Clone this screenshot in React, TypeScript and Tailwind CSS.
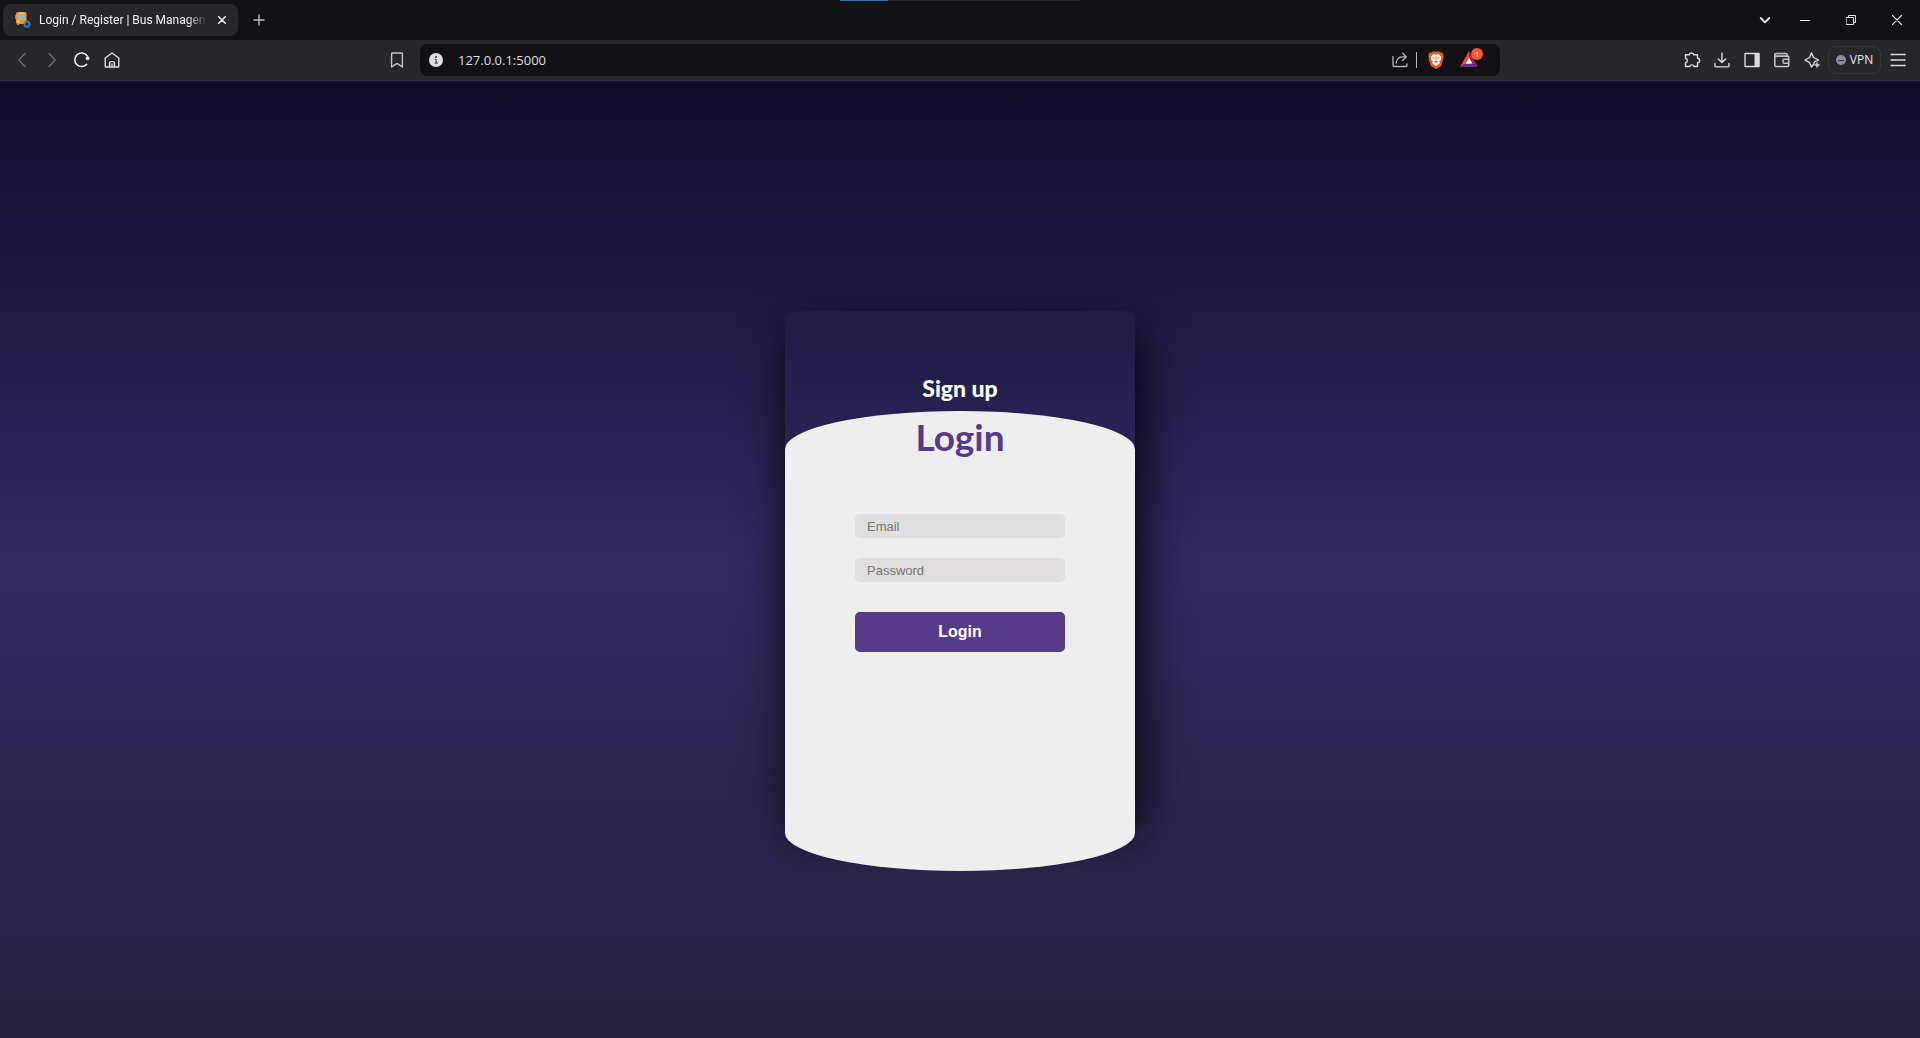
import React from "react";

function Glyph({ children, size = 18, className = "" }: { children: React.ReactNode; size?: number; className?: string }) {
  return (
    <svg
      width={size}
      height={size}
      viewBox={`0 0 ${size} ${size}`}
      fill="none"
      stroke="currentColor"
      strokeWidth="1.4"
      strokeLinecap="round"
      strokeLinejoin="round"
      className={`shrink-0 ${className}`}
      aria-hidden="true"
    >
      {children}
    </svg>
  );
}

function ToolButton({ label, className = "", children }: { label: string; className?: string; children: React.ReactNode }) {
  return (
    <button type="button" aria-label={label} className={`grid h-7 w-[30px] shrink-0 place-items-center ${className}`}>
      {children}
    </button>
  );
}

function BusIcon() {
  return (
    <svg width="16" height="16" viewBox="0 0 16 16" className="shrink-0" aria-hidden="true">
      <rect x="1" y="0" width="10.5" height="12" rx="1.8" fill="#f39a1d" />
      <rect x="2" y="11.5" width="2.2" height="1.6" rx="0.5" fill="#d98516" />
      <path d="M4 1.300h4.500" stroke="#fbe0a8" strokeWidth="0.8" />
      <rect x="2.3" y="2.4" width="8" height="5" rx="0.6" fill="#9fb4bd" />
      <rect x="0" y="3" width="1" height="4" fill="#c87a14" />
      <circle cx="3.4" cy="9.6" r="0.9" fill="#fff1c9" />
      <circle cx="12" cy="12.200" r="2.500" fill="#26262b" stroke="#2f86c5" strokeWidth="1.600" />
      <circle cx="12" cy="12.200" r="3.300" fill="none" stroke="#2f86c5" strokeWidth="1" strokeDasharray="1.300 1.290" />
    </svg>
  );
}

function ShieldIcon() {
  return (
    <svg width="16" height="18" viewBox="0 0 16 18" aria-hidden="true">
      <path d="M4.800.4h6.400l1.300 1.400 1.700-.2 1.500 2.300-.5 1.400.4 1.300-2 7.200c-.3 1-.8 1.500-1.600 2L8 18l-4-2.200c-.8-.5-1.300-1-1.600-2L.4 6.600l.4-1.300L.3 3.900l1.500-2.300 1.700.2z" fill="#f1561d" />
      <path d="M5.200 3.200L8 3.700l2.800-.5 2.500 2.600-.5 3.200-1.500 1.500.5 1.700L8 14.900l-3.800-2.700.5-1.700L3.200 9l-.5-3.200z" fill="#fff" />
      <path d="M4 6.200l2.800.6-.7 1.200zM12 6.200l-2.800.6.7 1.200zM7.500 5.500h1l-.2 4h-.6zM5.900 10.300L8 9.600l2.100.7L8 11.900z" fill="#f1561d" />
    </svg>
  );
}

function TabStrip() {
  return (
    <div className="relative flex h-10 items-center bg-[#111116] text-[#e8e8ec]">
      <div className="absolute left-[840px] top-0 flex h-px w-60 bg-[#25252b]">
        <div className="w-12 bg-[#2a6fae]" />
      </div>
      <div className="ml-[3px] flex h-8 w-[235px] items-center rounded-lg bg-[#26262b] pl-3">
        <BusIcon />
        <span className="ml-2 w-[168px] whitespace-nowrap font-['Roboto',sans-serif] text-[12px] leading-4 text-[#f2f2f4] [mask-image:linear-gradient(to_right,#000_148px,transparent)]">
          Login / Register | Bus Managem
        </span>
        <button type="button" aria-label="Close tab" className="ml-[5px] grid size-5 place-items-center">
          <Glyph size={10}>
            <path d="M1.700 1.700l6.600 6.600M8.300 1.700L1.700 8.300" strokeWidth="1.600" />
          </Glyph>
        </button>
      </div>
      <button type="button" aria-label="New tab" className="ml-[11px] grid size-5 place-items-center text-[#b9b9bf]">
        <Glyph size={12}>
          <path d="M6 1v10M1 6h10" />
        </Glyph>
      </button>
      <div className="ml-auto flex">
        <button type="button" aria-label="Search tabs" className="grid h-10 w-8 place-items-center">
          <Glyph size={12}>
            <path d="M1.700 4l4.300 4.300L10.300 4" strokeWidth="1.800" />
          </Glyph>
        </button>
        <button type="button" aria-label="Minimize" className="ml-px grid h-10 w-[46px] place-items-center">
          <Glyph size={10}>
            <path d="M0 5.500h10" strokeWidth="1" />
          </Glyph>
        </button>
        <button type="button" aria-label="Restore" className="grid h-10 w-[46px] place-items-center">
          <Glyph size={10}>
            <path d="M.5 2.500h7v7h-7zM2.500 2.500v-2h7v7h-2" strokeWidth="1" strokeLinejoin="miter" />
          </Glyph>
        </button>
        <button type="button" aria-label="Close" className="grid h-10 w-[46px] place-items-center">
          <Glyph size={10}>
            <path d="M.5.5l9 9M9.500.5l-9 9" strokeWidth="1.100" />
          </Glyph>
        </button>
      </div>
    </div>
  );
}

function AddressBar() {
  return (
    <div className="flex h-8 min-w-0 flex-1 items-center rounded-lg bg-[#111115] px-2">
      <svg width="14" height="14" viewBox="0 0 14 14" className="ml-px shrink-0" aria-hidden="true">
        <circle cx="7" cy="7" r="7" fill="#dedee3" />
        <circle cx="7" cy="4" r="0.9" fill="#2b2b31" />
        <path d="M5.800 6.400H7.200V10M5.600 10.100h3" stroke="#2b2b31" strokeWidth="1" fill="none" />
      </svg>
      <input
        aria-label="Address"
        defaultValue="127.0.0.1:5000"
        className="ml-[15px] min-w-0 flex-1 bg-transparent text-[13px] leading-5 text-[#dfdfe4] outline-none"
      />
      <button type="button" aria-label="Share" className="text-[#b4b4ba]">
        <Glyph size={16}>
          <path d="M1 4.500v8.800c0 .7.500 1.200 1.200 1.200h11.600c.7 0 1.200-.5 1.200-1.200V12M4.200 11C4.600 7.400 7 5 10 4.800h4M10.600 1.200l3.700 3.600-3.700 3.700" strokeWidth="1.300" />
        </Glyph>
      </button>
      <div className="ml-2 h-4 w-px bg-[#b4b4ba]" />
      <button type="button" aria-label="Brave Shields" className="ml-[11px]">
        <ShieldIcon />
      </button>
      <button type="button" aria-label="Brave Rewards" className="relative ml-4 mr-2 h-7 w-6">
        <svg width="18" height="16" viewBox="0 0 18 16" className="mb-[2px]" aria-hidden="true">
          <path d="M9 0L0 16l5.400-3.200L9 6.400z" fill="#ff4724" />
          <path d="M9 0l9 16-5.400-3.200L9 6.400z" fill="#9e1f63" />
          <path d="M0 16h18l-5.400-3.200H5.400z" fill="#662d91" />
          <path d="M9 6.400l3.600 6.400H5.400z" fill="#fff" />
        </svg>
        <span className="absolute left-[11px] top-[2px] grid size-3 place-items-center rounded-full bg-[#fb542b] text-[8px] leading-3 text-white">1</span>
      </button>
    </div>
  );
}

function Toolbar() {
  return (
    <div className="flex h-[41px] items-center border-b border-[#34343c] bg-[#26262b] text-[#d9d9de]">
      <div className="ml-[7px] flex w-[405px] items-center">
        <ToolButton label="Back" className="text-[#67676e]">
          <Glyph><path d="M12 2.500L5.800 9l6.200 6.500" /></Glyph>
        </ToolButton>
        <ToolButton label="Forward" className="text-[#67676e]">
          <Glyph><path d="M6 2.500L12.200 9 6 15.500" /></Glyph>
        </ToolButton>
        <ToolButton label="Reload" className="text-[#f0f0f3]">
          <Glyph>
            <path d="M13.600 13.400A6.800 6.800 0 1 1 14 4.600" strokeWidth="1.600" />
            <circle cx="14.600" cy="7.200" r="1.900" fill="currentColor" stroke="none" />
          </Glyph>
        </ToolButton>
        <ToolButton label="Home">
          <Glyph><path d="M2.200 7L9 2l6.800 5v8.200c0 .5-.3.8-.8.8H3c-.5 0-.8-.3-.8-.8zM6.600 16v-4.600c0-.5.3-.8.8-.8h3.200c.5 0 .8.3.8.8V16M9 13v3" /></Glyph>
        </ToolButton>
        <ToolButton label="Bookmark" className="ml-auto text-[#c4c4ca]">
          <Glyph><path d="M4.300 2h9.400c.4 0 .7.3.7.700V16L9 12.400 3.600 16V2.700c0-.4.300-.7.700-.7z" /></Glyph>
        </ToolButton>
      </div>
      <div className="ml-2 flex min-w-0 flex-1">
        <AddressBar />
      </div>
      <div className="ml-[177px] flex items-center">
        <ToolButton label="Extensions">
          <Glyph><path d="M2.500 3.700h3.700a2.400 2.400 0 0 1 4.600 0h3.700v3.600a2.200 2.200 0 0 1 0 4.400v3.800h-3.400a2.300 2.300 0 0 0-4.400 0H2.500v-3.700a2.300 2.300 0 0 0 0-4.500z" /></Glyph>
        </ToolButton>
        <ToolButton label="Downloads">
          <Glyph><path d="M9 2v9.500M5.300 8L9 11.600 12.700 8M2 12.500v2.200c0 .7.500 1.200 1.200 1.200h11.600c.7 0 1.200-.5 1.200-1.200v-2.200" /></Glyph>
        </ToolButton>
        <ToolButton label="Sidebar">
          <Glyph>
            <rect x="2" y="2.500" width="14" height="13" rx="0.500" />
            <path d="M11.500 2h4.800v14h-4.800z" fill="currentColor" stroke="none" />
          </Glyph>
        </ToolButton>
        <ToolButton label="Wallet" className="text-[#c0c0c6]">
          <Glyph><path d="M14 5V3.500c0-.6-.4-1-1-1H3c-.7 0-1.200.5-1.200 1.200v10.600c0 .7.500 1.200 1.200 1.200h11.500c.7 0 1.200-.5 1.200-1.200V6.300c0-.7-.5-1.200-1.200-1.200H2M15.800 8.200H11c-.6 0-1 .4-1 1v2c0 .6.400 1 1 1h4.800" strokeWidth="1.600" /></Glyph>
        </ToolButton>
        <ToolButton label="Leo AI">
          <Glyph><path d="M12.800 10.200l-1 .5-1.300 2.800L8.500 16l-1.900-4.300L2 9l4.600-2.500L8.500 2l2.200 4.500L15.500 9l-1.500.8M14 12v4M12 14h4" /></Glyph>
        </ToolButton>
      </div>
      <button type="button" className="ml-px mr-px flex h-7 w-[53px] items-center justify-center gap-1 rounded-lg border border-[#34343a] text-[12px] leading-4 text-[#e4e4e8]">
        <span className="grid size-[10px] place-items-center rounded-full bg-[#8d8da0]">
          <span className="h-px w-[6px] bg-[#33333d]" />
        </span>
        VPN
      </button>
      <ToolButton label="Menu" className="ml-px mr-[7px]">
        <Glyph size={16}><path d="M1 2.500h14M1 8h14M1 13.500h14" /></Glyph>
      </ToolButton>
    </div>
  );
}

const fieldClass =
  "h-6 w-3/5 rounded-[5px] bg-[#e0dede] px-3 font-['Liberation_Sans',Arial,sans-serif] text-[13px] leading-4 text-[#222] outline-none placeholder:text-[#757575]";

function LoginCard() {
  return (
    <main className="w-[350px] max-w-full rounded-[10px] shadow-[5px_20px_50px_#000]">
      <button
        type="button"
        className="block h-[100px] w-full pt-[54px] text-center font-['Lato',sans-serif] text-[23px] font-black leading-[40px] text-white"
      >
        Sign up
      </button>
      <form
        onSubmit={(event) => event.preventDefault()}
        className="relative mb-[-60px] flex min-h-[460px] flex-col items-center rounded-[60%/10%] bg-[#eee]"
      >
        <h1 className="mt-1 font-['Lato',sans-serif] text-[37px] font-bold leading-[44px] text-[#573b8a]">Login</h1>
        <input type="email" aria-label="Email" placeholder="Email" className={`mt-[55px] ${fieldClass}`} />
        <input type="password" aria-label="Password" placeholder="Password" className={`mt-5 ${fieldClass}`} />
        <button
          type="submit"
          className="mt-[30px] h-10 w-3/5 rounded-[5px] bg-[#573b8a] font-['Liberation_Sans',Arial,sans-serif] text-[16px] font-bold leading-5 text-white"
        >
          Login
        </button>
      </form>
    </main>
  );
}

export default function App() {
  return (
    <div className="flex min-h-screen flex-col font-['Open_Sans',sans-serif]">
      <header>
        <TabStrip />
        <Toolbar />
      </header>
      <div className="flex flex-1 items-center justify-center overflow-hidden bg-linear-to-b/srgb from-[#0f0c29] via-[#302b63] to-[#24243e] pt-[3px]">
        <LoginCard />
      </div>
    </div>
  );
}
